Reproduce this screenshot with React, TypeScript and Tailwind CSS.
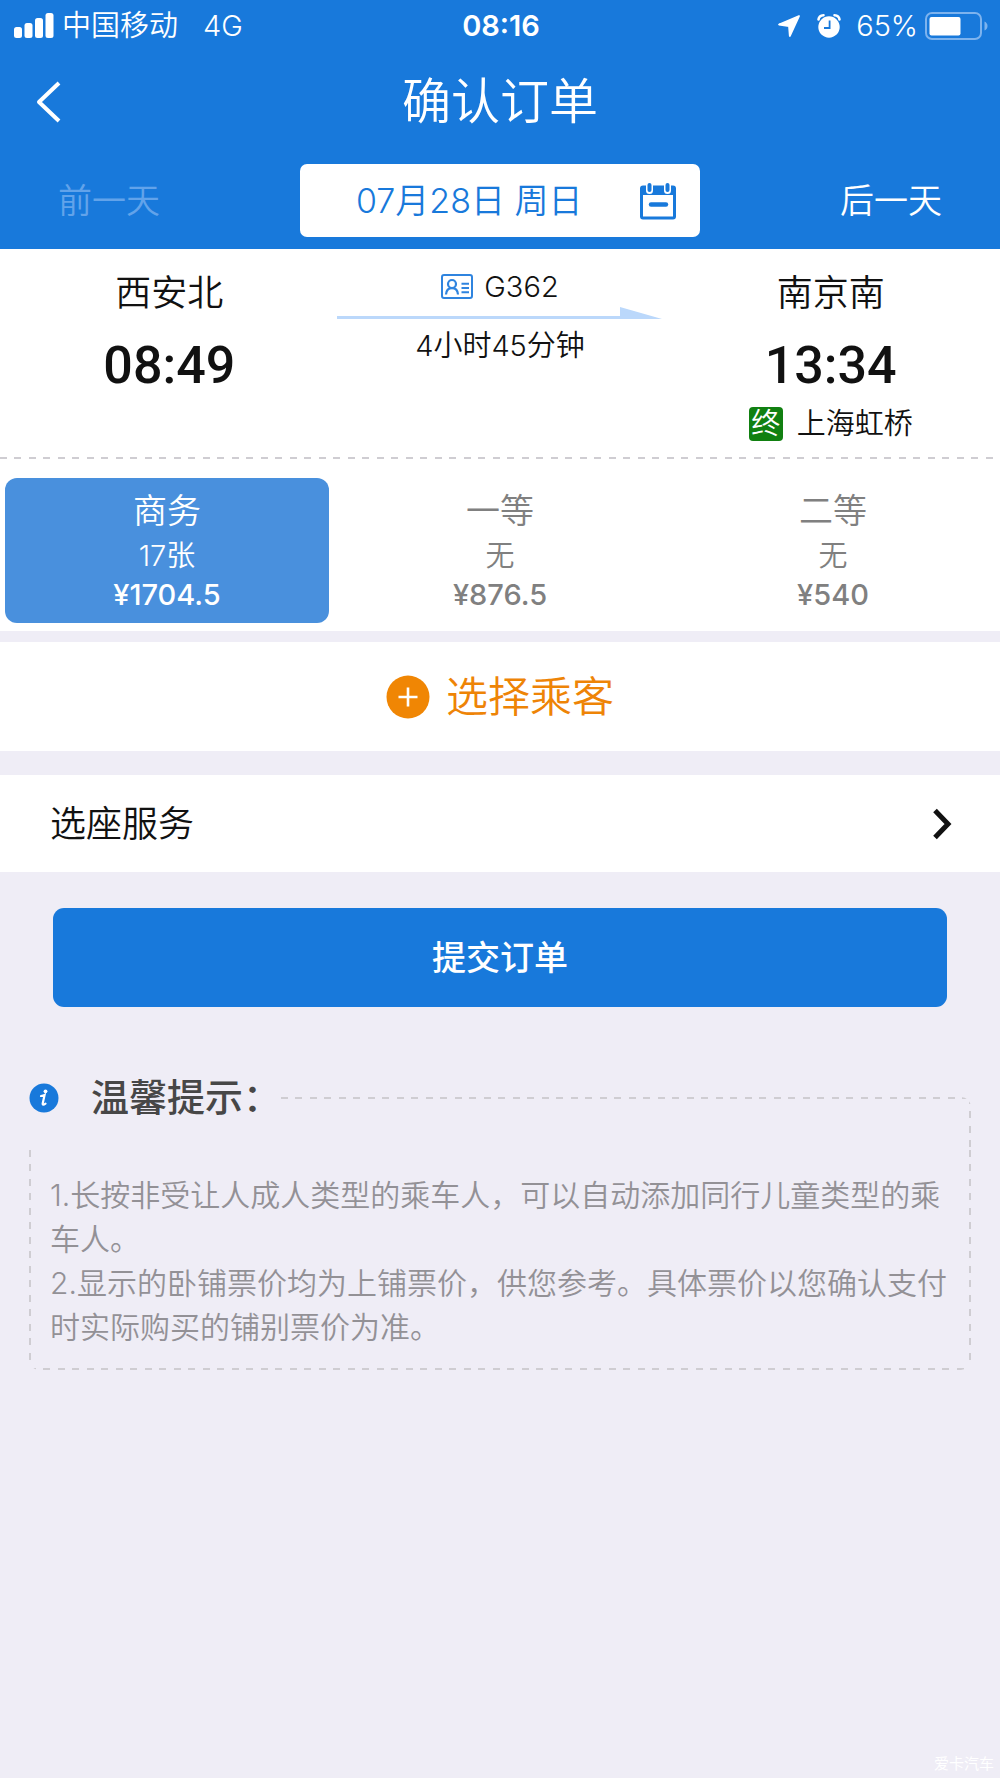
import { useState } from "react";

const seats = [
  { name: "商务", left: "17张", price: "¥1704.5" },
  { name: "一等", left: "无", price: "¥876.5" },
  { name: "二等", left: "无", price: "¥540" },
];

const tips = [
  "1.长按非受让人成人类型的乘车人，可以自动添加同行儿童类型的乘车人。",
  "2.显示的卧铺票价均为上铺票价，供您参考。具体票价以您确认支付时实际购买的铺别票价为准。",
];

const dashX =
  "bg-[repeating-linear-gradient(90deg,#cfcdd2_0_7px,transparent_7px_14px,#cfcdd2_14px_21px,transparent_21px_29px)]";
const dashY =
  "bg-[repeating-linear-gradient(180deg,#cfcdd2_0_7px,transparent_7px_14px,#cfcdd2_14px_21px,transparent_21px_29px)]";

const StatusBar = () => (
  <div className="flex h-[50px] items-center justify-between pt-[2px] pr-[12px] pl-[14px] text-[29px] leading-[40px]">
    <div className="flex flex-1 items-center">
      <svg width="40" height="26" viewBox="0 0 40 26" fill="#fff" aria-hidden="true">
        <rect x="0" y="14" width="8" height="11" rx="2.5" />
        <rect x="10.5" y="10" width="8" height="15" rx="2.5" />
        <rect x="21" y="5" width="8" height="20" rx="2.5" />
        <rect x="31.5" y="0" width="8" height="25" rx="2.5" />
      </svg>
      <span className="ml-[8px]">中国移动</span>
      <span className="ml-[25px]">4G</span>
    </div>
    <span className="font-semibold">08:16</span>
    <div className="flex flex-1 items-center justify-end">
      <svg width="24" height="24" viewBox="0 0 24 24" aria-hidden="true">
        <path
          d="M22 2 L2 10.5 L12 12 L12.8 22 Z"
          fill="#fff"
          stroke="#fff"
          strokeWidth="1.8"
          strokeLinejoin="round"
        />
      </svg>
      <svg className="ml-[15px]" width="26" height="26" viewBox="0 0 26 26" aria-hidden="true">
        <circle cx="13" cy="14" r="10.7" fill="#fff" />
        <path
          d="M2.5 6.5 Q3 2.5 7.5 2.2 M23.5 6.5 Q23 2.5 18.5 2.2"
          fill="none"
          stroke="#fff"
          strokeWidth="2.6"
          strokeLinecap="round"
        />
        <path d="M13.6 7.5 V15 H8" fill="none" stroke="#1879db" strokeWidth="1.8" />
      </svg>
      <span className="ml-[14px]">65%</span>
      <svg className="ml-[7px]" width="63" height="28" viewBox="0 0 63 28" aria-hidden="true">
        <rect x="1" y="1" width="55" height="26" rx="6" fill="none" stroke="#7db3ee" strokeWidth="2" />
        <rect x="4.5" y="5" width="31" height="18.5" rx="2" fill="#fff" />
        <path d="M59.5 9.5 Q62.5 11 62.5 14 Q62.5 17 59.5 18.5 Z" fill="#7db3ee" />
      </svg>
    </div>
  </div>
);

const CalendarIcon = () => (
  <svg width="38" height="38" viewBox="0 0 38 38" aria-hidden="true">
    <rect x="2.5" y="5" width="33" height="31" rx="1.5" fill="#fff" stroke="#1879db" strokeWidth="3" />
    <rect x="2" y="4" width="34" height="9" fill="#1879db" />
    <rect x="7" y="0" width="7" height="12" rx="3.5" fill="#fff" />
    <rect x="25" y="0" width="7" height="12" rx="3.5" fill="#fff" />
    <rect x="8.5" y="1" width="4" height="9" rx="2" fill="#1879db" />
    <rect x="26.5" y="1" width="4" height="9" rx="2" fill="#1879db" />
    <path d="M12 22.5 H27" stroke="#1879db" strokeWidth="4.4" strokeLinecap="round" />
  </svg>
);

const IdCardIcon = () => (
  <svg width="32" height="26" viewBox="0 0 32 26" fill="none" stroke="#2f84df" aria-hidden="true">
    <rect x="1" y="1" width="30" height="23" rx="2" strokeWidth="2" />
    <circle cx="11" cy="10" r="4" strokeWidth="2.2" />
    <path d="M5 20.5 Q5.5 14.2 11 14.2 Q16.5 14.2 17 20.5" strokeWidth="2.2" />
    <path d="M20.5 9.8 H28 M20.5 14 H28 M20.5 18.2 H28" strokeWidth="2" />
  </svg>
);

const Header = () => (
  <header className="bg-[#1879db] text-white">
    <StatusBar />
    <div className="grid h-[104px] grid-cols-[1fr_auto_1fr] items-center px-[34px]">
      <button type="button" aria-label="返回" className="justify-self-start">
        <svg width="28" height="44" viewBox="0 0 28 44" fill="none" stroke="#fff" strokeWidth="4" aria-hidden="true">
          <path d="M25 3 L5 22 L25 41" strokeLinejoin="round" />
        </svg>
      </button>
      <h1 className="text-[49px] leading-[60px]">确认订单</h1>
    </div>
    <div className="flex items-center justify-between px-[58px] pt-[10px] pb-[12px] text-[34px] leading-[50px]">
      <button type="button" disabled className="text-[#62a3ea]">
        前一天
      </button>
      <button
        type="button"
        className="flex h-[73px] w-2/5 max-w-[400px] items-center justify-between rounded-[7px] bg-white pr-[23px] pl-[56px] text-[#1879db] min-[900px]:w-[400px]"
      >
        <span className="whitespace-nowrap">07月28日 周日</span>
        <CalendarIcon />
      </button>
      <button type="button">后一天</button>
    </div>
  </header>
);

const Journey = () => (
  <section className="grid grid-cols-3 px-1 pt-[19px] pb-[16px] text-center text-[#111]">
    <div>
      <p className="text-[36px] leading-[50px]">西安北</p>
      <p className="mt-[18px] font-[Roboto,sans-serif] text-[52px] leading-[60px] font-medium">08:49</p>
    </div>
    <div className="flex flex-col items-center pt-[1px] text-[29px] leading-[36px]">
      <p className="flex items-center gap-[11px]">
        <IdCardIcon />
        G362
      </p>
      <svg className="mt-[2px] w-full max-w-[325px]" viewBox="0 0 325 12" fill="#bbd8fb" aria-hidden="true">
        <path d="M0 9 H283 V0 L325 12 H0 Z" />
      </svg>
      <p className="mt-[9px]">4小时45分钟</p>
    </div>
    <div>
      <p className="text-[36px] leading-[50px]">南京南</p>
      <p className="mt-[18px] font-[Roboto,sans-serif] text-[52px] leading-[60px] font-medium">13:34</p>
      <p className="mt-[11px] flex h-[34px] items-center justify-center gap-[14px] text-[29px] leading-[34px]">
        <span className="size-[34px] rounded-[4px] bg-[#118011] text-white">终</span>
        上海虹桥
      </p>
    </div>
  </section>
);

const SeatPicker = () => {
  const [selected, setSelected] = useState("商务");

  return (
    <section className="grid grid-cols-3 gap-[9px] px-[5px] pt-[19px] pb-[8px]">
      {seats.map((seat) => (
        <button
          key={seat.name}
          type="button"
          aria-pressed={selected === seat.name}
          onClick={() => setSelected(seat.name)}
          className={`flex flex-col items-center rounded-[12px] pt-[8px] pb-[9px] text-[29px] ${
            selected === seat.name ? "bg-[#4990dd] text-white" : "text-[#808080]"
          }`}
        >
          <span className="text-[34px] leading-[50px]">{seat.name}</span>
          <span className="leading-[40px]">{seat.left}</span>
          <span className="leading-[38px] font-medium">{seat.price}</span>
        </button>
      ))}
    </section>
  );
};

const Tips = () => (
  <section className="mx-[29px] mt-[39px]">
    <div className="flex h-[104px] items-center">
      <svg width="30" height="30" viewBox="0 0 30 30" aria-hidden="true">
        <circle cx="15" cy="15" r="14.5" fill="#1879db" />
        <circle cx="16.5" cy="8.3" r="1.9" fill="#fff" />
        <path
          d="M12 13 Q14.5 12.6 15.6 12 L13.7 20.5 Q13.4 22.8 16.5 20.6"
          fill="none"
          stroke="#fff"
          strokeWidth="2.2"
          strokeLinecap="round"
        />
      </svg>
      <h2 className="ml-[32px] pb-[3px] text-[38px] leading-[50px] font-medium text-[#474747]">温馨提示：</h2>
      {/* top right corner of the frame */}
      <div className="flex h-[53px] flex-1 justify-between self-end overflow-hidden rounded-tr-[10px]">
        <div className={`h-[2px] flex-1 ${dashX}`} />
        <div className={`w-[2px] ${dashY}`} />
      </div>
    </div>
    <div className="overflow-hidden rounded-b-[10px]">
      <div className="flex">
        <div className={`w-[2px] ${dashY}`} />
        <div className="flex-1 px-[19px] pt-[23px] pb-[19px] text-[30px] leading-[44px] text-[#939196]">
          {tips.map((tip) => (
            <p key={tip}>{tip}</p>
          ))}
        </div>
        <div className={`w-[2px] ${dashY}`} />
      </div>
      <div className={`h-[2px] ${dashX}`} />
    </div>
  </section>
);

export default function App() {
  return (
    <div
      lang="zh-CN"
      className="flex min-h-screen flex-col bg-[#efedf6] font-[Inter,'Noto_Sans_CJK_SC',sans-serif] font-[350]"
    >
      <Header />
      <main>
        <div className="bg-white">
          <Journey />
          <div className={`h-[2px] ${dashX}`} />
          <SeatPicker />
        </div>

        <button
          type="button"
          className="mt-[11px] flex h-[109px] w-full items-center justify-center gap-[16px] bg-white text-[42px] text-[#ee8406]"
        >
          <svg width="44" height="44" viewBox="0 0 44 44" aria-hidden="true">
            <circle cx="22" cy="22" r="21.5" fill="#f08604" />
            <path d="M22 12.5 V31.5 M12.5 22 H31.5" stroke="#fff" strokeWidth="2.6" />
          </svg>
          选择乘客
        </button>

        <button
          type="button"
          className="mt-[24px] flex h-[97px] w-full items-center justify-between bg-white pr-[47px] pl-[50px] text-[36px] text-[#111]"
        >
          选座服务
          <svg width="22" height="32" viewBox="0 0 22 32" fill="none" stroke="#111" strokeWidth="5" aria-hidden="true">
            <path d="M4 2.5 L17 16 L4 29.5" />
          </svg>
        </button>

        <div className="px-[53px] pt-[36px]">
          <button
            type="button"
            className="h-[99px] w-full rounded-[11px] bg-[#1879db] text-[34px] font-medium text-white"
          >
            提交订单
          </button>
        </div>

        <Tips />
      </main>
      <p className="mt-auto self-end pr-[6px] pb-[3px] text-[15px] leading-[22px] font-normal text-white">爱卡汽车</p>
    </div>
  );
}
